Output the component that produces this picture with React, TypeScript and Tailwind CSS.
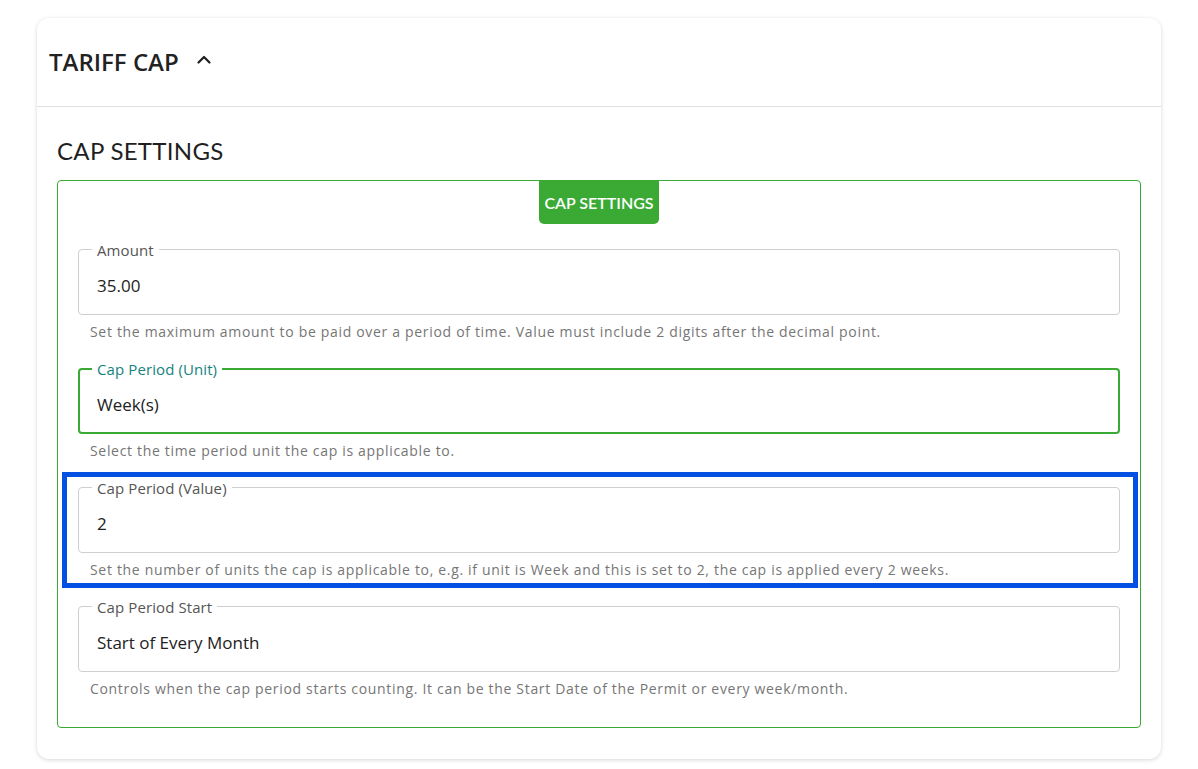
import React from "react";

const fieldFont = { fontFamily: '"Open Sans", "Liberation Sans", sans-serif' };

function Field({
  label,
  value,
  helper,
  focused = false,
}: {
  label: string;
  value: string;
  helper: string;
  focused?: boolean;
}) {
  return (
    <div className="flex flex-col">
      <div
        className={
          focused
            ? "relative h-[66px] rounded-[4px] border-2 border-[#3aaa35] pl-[17px] pt-[7px] flex items-center"
            : "relative h-[66px] rounded-[4px] border border-[#cfcfcf] pl-[18px] pt-[8px] flex items-center"
        }
      >
        <span
          className={
            focused
              ? "absolute -top-[11px] left-[12px] bg-white px-[5px] text-[15px] leading-[20px] tracking-[0.1px] text-[#15837c]"
              : "absolute -top-[10px] left-[13px] bg-white px-[5px] text-[15px] leading-[20px] tracking-[0.1px] text-[#555555]"
          }
        >
          {label}
        </span>
        <span className="text-[17px] text-[#222222]">{value}</span>
      </div>
      <div className="mt-[7px] ml-3 text-[14px] leading-[20px] tracking-[0.68px] text-[#767676]">
        {helper}
      </div>
    </div>
  );
}

export default function App() {
  return (
    <div className="min-h-screen bg-white pt-[18px]" style={fieldFont}>
      <div className="ml-[37px] w-[1124px] rounded-xl bg-white shadow-[0_1px_4px_rgba(0,0,0,0.16)]">
        <div className="flex h-[89px] items-center gap-[17px] border-b border-[#e0e0e0] pl-3">
          <span className="text-[24px] font-semibold text-[#222222]">TARIFF CAP</span>
          <svg width="16" height="16" viewBox="0 0 16 16" className="mt-[-4px]">
            <path d="M2.5 10.5 L8 5 L13.5 10.5" fill="none" stroke="#1f1f1f" strokeWidth="2.2" strokeLinecap="round" strokeLinejoin="round" />
          </svg>
        </div>
        <div className="px-[20px] pt-[28px] pb-[31px]">
          <h2
            className="text-[24px] leading-[32px] text-[#1f1f1f] tracking-[0.3px]"
            style={{ fontFamily: 'Lato, "Liberation Sans", sans-serif' }}
          >
            CAP SETTINGS
          </h2>
          <div className="relative mt-[13px] rounded-[4px] border border-[#3aaa35] px-[20px] pb-[28px]">
            <div className="flex justify-center">
              <div
                className="flex h-[43px] w-[120px] items-center justify-center rounded-b-[5px] bg-[#3aaa35] text-[16px] font-semibold text-white"
                style={{ fontFamily: 'Lato, "Liberation Sans", sans-serif' }}
              >
                CAP SETTINGS
              </div>
            </div>
            <div className="mt-[25px] flex flex-col gap-[26px]">
              <Field
                label="Amount"
                value="35.00"
                helper="Set the maximum amount to be paid over a period of time. Value must include 2 digits after the decimal point."
              />
              <Field
                label="Cap Period (Unit)"
                value="Week(s)"
                helper="Select the time period unit the cap is applicable to."
                focused
              />
              <Field
                label="Cap Period (Value)"
                value="2"
                helper="Set the number of units the cap is applicable to, e.g. if unit is Week and this is set to 2, the cap is applied every 2 weeks."
              />
              <Field
                label="Cap Period Start"
                value="Start of Every Month"
                helper="Controls when the cap period starts counting. It can be the Start Date of the Permit or every week/month."
              />
            </div>
            <div className="pointer-events-none absolute left-[4px] top-[291px] h-[116px] w-[1076px] border-[5px] border-[#0350e2]" />
          </div>
        </div>
      </div>
    </div>
  );
}
